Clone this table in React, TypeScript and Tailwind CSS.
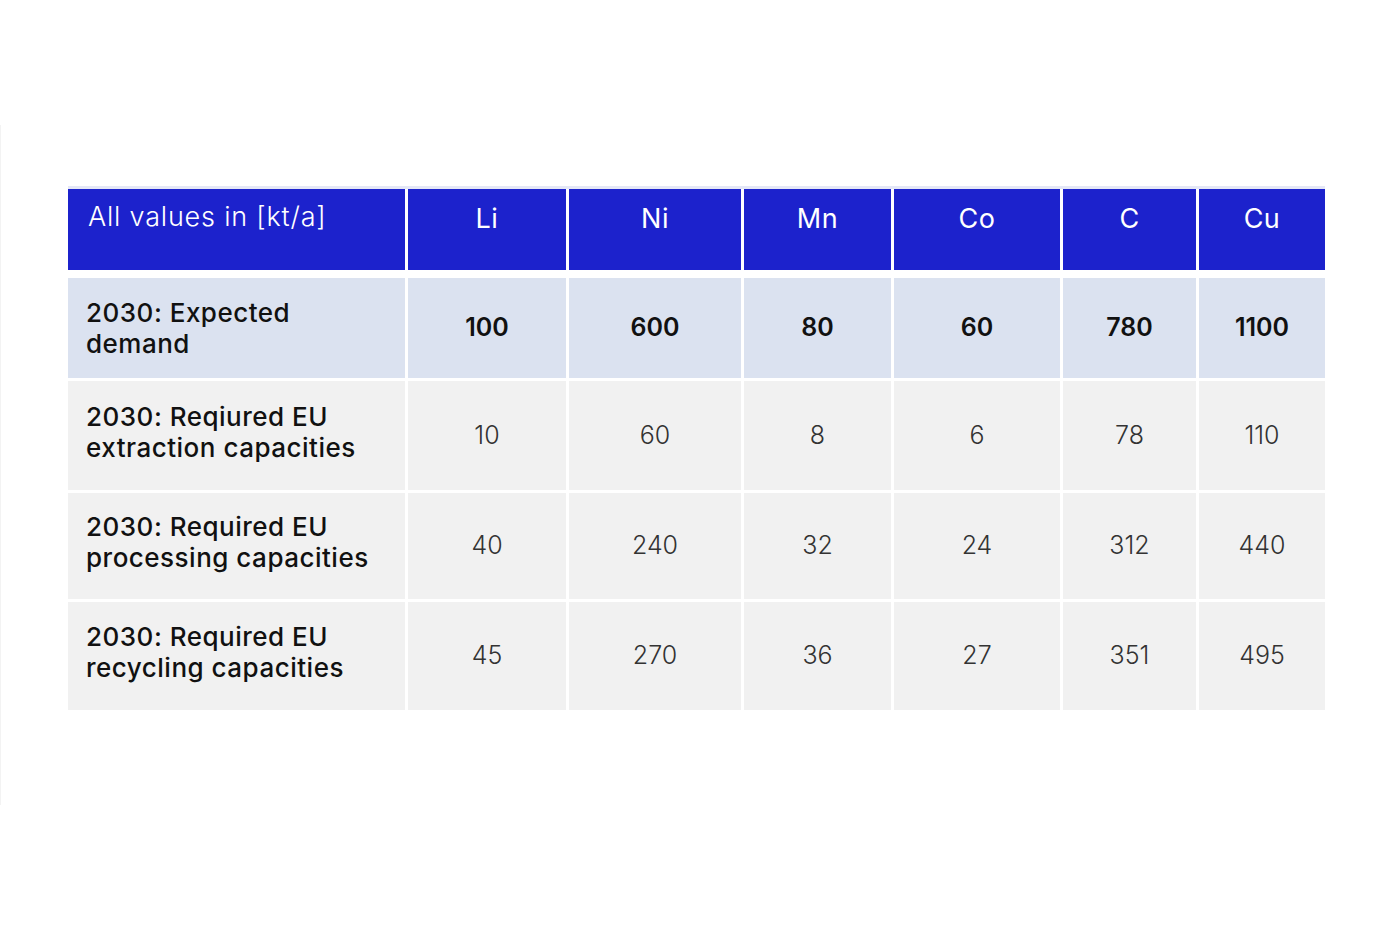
import React from "react";

const cols = ["Li", "Ni", "Mn", "Co", "C", "Cu"];
const rows: { label: string[]; values: string[]; demand?: boolean; h: string }[] = [
  { label: ["2030: Expected", "demand"], values: ["100", "600", "80", "60", "780", "1100"], demand: true, h: "h-[100px]" },
  { label: ["2030: Reqiured EU", "extraction capacities"], values: ["10", "60", "8", "6", "78", "110"], h: "h-[109px]" },
  { label: ["2030: Required EU", "processing capacities"], values: ["40", "240", "32", "24", "312", "440"], h: "h-[106px]" },
  { label: ["2030: Required EU", "recycling capacities"], values: ["45", "270", "36", "27", "351", "495"], h: "h-[108px]" },
];

const grid = "grid grid-cols-[337px_158px_172px_147px_166px_133px_126px] gap-x-[3px]";

export default function App() {
  return (
    <div className="w-[1400px] h-[933px] bg-white relative" style={{ fontFamily: "Inter, 'Open Sans', sans-serif" }}>
      <div className="absolute left-0 top-[125px] h-[680px] w-px bg-[#f3f3f3]" />
      <div className="pt-[186px] pl-[68px]">
        <div className="w-[1257px] border-t-[3px] border-[#e4e7f6]">
          <div className={`${grid} h-[81px]`}>
            <div className="bg-[#1c22cc] text-white text-[27px] font-light pl-[20px] pt-[8px] tracking-[0.8px]">All values in [kt/a]</div>
            {cols.map((c) => (
              <div key={c} className="bg-[#1c22cc] text-white text-[27px] font-normal text-center pt-[10px] tracking-[0.5px]">{c}</div>
            ))}
          </div>
          <div className="flex flex-col gap-y-[3px] mt-[8px]">
            {rows.map((r, i) => (
              <div key={i} className={`${grid} ${r.h}`}>
                <div className={`${r.demand ? "bg-[#dbe2f0]" : "bg-[#f1f1f1] pb-[8px]"} flex flex-col justify-center pl-[18px] text-[26px] leading-[31px] font-medium text-[#111] tracking-[0.5px]`}>
                  <span>{r.label[0]}</span>
                  <span>{r.label[1]}</span>
                </div>
                {r.values.map((v, j) => (
                  <div
                    key={j}
                    className={`${r.demand ? "bg-[#dbe2f0] font-semibold text-[#111]" : "bg-[#f1f1f1] font-light text-[#333]"} flex items-center justify-center text-[25px]`}
                  >
                    {v}
                  </div>
                ))}
              </div>
            ))}
          </div>
        </div>
      </div>
    </div>
  );
}
